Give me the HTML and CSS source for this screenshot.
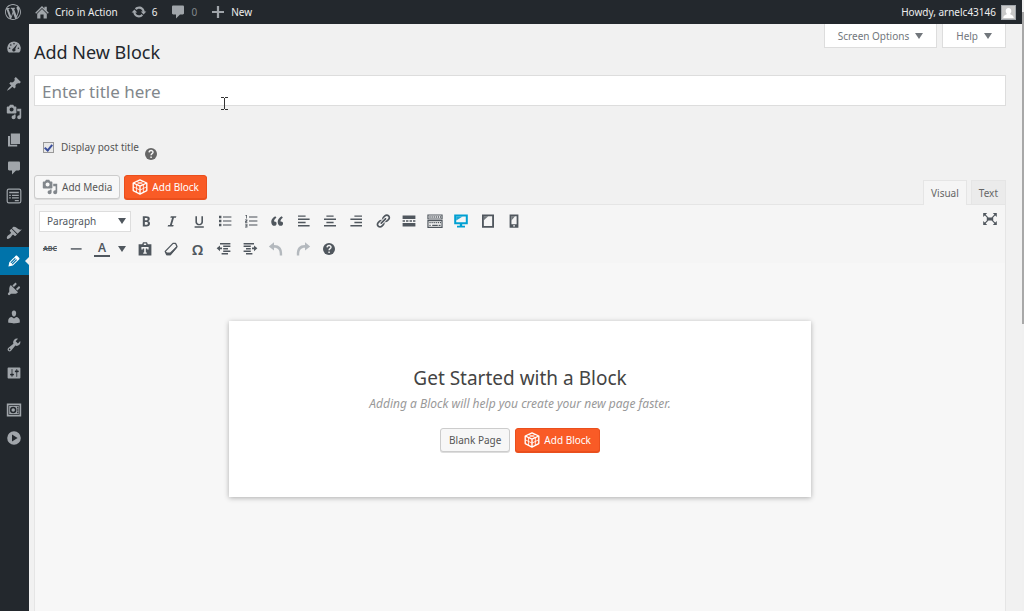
FILE: index.html
```html
<!DOCTYPE html>
<html lang="en">
<head>
  <meta charset="UTF-8">
  <meta name="viewport" content="width=device-width, initial-scale=1">
  <title>Add New Block</title>
  <link rel="stylesheet" href="styles.css">
</head>
<body>
  <svg class="sprite" aria-hidden="true">
    <symbol id="i-wp" viewBox="0 0 20 20"><path d="M20 10c0-5.51-4.49-10-10-10C4.48 0 0 4.49 0 10c0 5.52 4.48 10 10 10 5.51 0 10-4.48 10-10zM7.78 15.37L4.37 6.22c.55-.02 1.17-.08 1.17-.08.5-.06.44-1.13-.06-1.11 0 0-1.45.11-2.37.11-.18 0-.37 0-.58-.01C4.12 2.69 6.87 1.11 10 1.11c2.33 0 4.45.87 6.05 2.34-.68-.11-1.65.39-1.65 1.58 0 .74.45 1.36.9 2.1.35.61.55 1.36.55 2.46 0 1.49-1.4 5-1.4 5l-3.03-8.37c.54-.02.82-.17.82-.17.5-.05.44-1.25-.06-1.22 0 0-1.44.12-2.38.12-.87 0-2.33-.12-2.33-.12-.5-.03-.56 1.2-.06 1.22l.92.08 1.26 3.41zM17.41 10c.24-.64.74-1.87.43-4.25.7 1.29 1.05 2.71 1.05 4.25 0 3.29-1.73 6.24-4.4 7.78.97-2.59 1.94-5.2 2.92-7.78zM6.1 18.09C3.12 16.65 1.11 13.53 1.11 10c0-1.3.23-2.48.72-3.59C3.25 10.3 4.67 14.2 6.1 18.09zm4.03-6.63l2.58 6.98c-.86.29-1.76.45-2.71.45-.79 0-1.57-.11-2.29-.33.81-2.38 1.62-4.74 2.42-7.1z"/></symbol>
    <symbol id="i-home" viewBox="0 0 20 20"><path d="M16 8.500l2.500 2.500-1.200 1.200L10 4.900l-7.300 7.300L1.500 11 10 2.500l3 3v-2h3zM10 6.300l6 6V18h-4v-5H8v5H4v-5.700z"/></symbol>
    <symbol id="i-update" viewBox="0 0 20 20"><path d="M10.200 3.280c3.530 0 6.430 2.610 6.920 6h2.080l-3.500 4-3.500-4h2.320c-.45-1.970-2.210-3.450-4.320-3.450-1.450 0-2.730.71-3.540 1.780L4.950 5.660C6.230 4.200 8.110 3.280 10.200 3.280zm-.4 13.440c-3.520 0-6.430-2.610-6.920-6H.8l3.500-4 3.500 4H5.480c.45 1.970 2.210 3.450 4.320 3.450 1.450 0 2.730-.71 3.540-1.780l1.710 1.950c-1.280 1.460-3.150 2.380-5.250 2.380z"/></symbol>
    <symbol id="i-comment" viewBox="0 0 20 20"><path d="M4 2h12c.8 0 1.500.7 1.500 1.500v8c0 .8-.7 1.500-1.500 1.500h-3.500l-5 5v-5H4c-.8 0-1.500-.7-1.500-1.500v-8C2.500 2.700 3.200 2 4 2z"/></symbol>
    <symbol id="i-plus" viewBox="0 0 20 20"><path d="M17.500 8.600v2.800h-6.100v6.100H8.600v-6.100H2.500V8.600h6.100V2.500h2.800v6.100z"/></symbol>
    <symbol id="i-dash" viewBox="0 0 20 20"><path fill-rule="evenodd" d="M3.500 17h13A8.500 8.500 0 1 0 3.500 17zM10 5a1 1 0 1 1 0 2 1 1 0 0 1 0-2zM6 6.500a1 1 0 1 1 0 2 1 1 0 0 1 0-2zM14.500 6l-3 6.500a2 2 0 1 1-2.400-.7zM4.500 10.500a1 1 0 1 1 0 2 1 1 0 0 1 0-2zM15.500 10.500a1 1 0 1 1 0 2 1 1 0 0 1 0-2z"/></symbol>
    <symbol id="i-pin" viewBox="0 0 20 20"><path d="M10.440 3.020l1.820-1.820 6.360 6.350-1.830 1.820c-1.050-.68-2.480-.57-3.410.36l-.75.75c-.92.93-1.040 2.350-.35 3.410l-1.830 1.820-2.410-2.410-2.800 2.790c-.42.42-3.380 2.710-3.800 2.290s1.860-3.390 2.280-3.810l2.790-2.790L4.100 9.360l1.830-1.820c1.050.69 2.480.57 3.400-.36l.75-.75c.93-.92 1.050-2.350.36-3.410z"/></symbol>
    <symbol id="i-media" viewBox="0 0 20 20"><path d="M13 11V4c0-.55-.45-1-1-1h-1.670L9 1H5L3.670 3H2c-.55 0-1 .45-1 1v7c0 .55.45 1 1 1h10c.55 0 1-.45 1-1zM7 4.500c1.380 0 2.500 1.120 2.500 2.500S8.380 9.500 7 9.500 4.500 8.380 4.500 7 5.620 4.500 7 4.500zM14 6h5v10.500c0 1.380-1.120 2.500-2.500 2.500S14 17.880 14 16.500s1.120-2.500 2.500-2.500c.17 0 .34.020.5.050V9h-3V6zm-4 8.050V13h2v3.500c0 1.380-1.120 2.500-2.500 2.500S7 17.880 7 16.500 8.120 14 9.500 14c.17 0 .34.020.5.050z"/></symbol>
    <symbol id="i-page" viewBox="0 0 20 20"><path d="M6 15V2h11.500v13zM5 16h9v2H2.500V5H5z"/></symbol>
    <symbol id="i-form" viewBox="0 0 20 20"><rect x="1.500" y="1.500" width="17" height="17" rx="2" fill="none" stroke="currentColor" stroke-width="1.500"/><path d="M4 4.800h12v1.700H4zM4 8.500h2V10H4zM7.500 8.500H16V10H7.500zM4 11.500h2V13H4zM7.500 11.500H16V13H7.500zM11 15h5v1.500h-5z"/></symbol>
    <symbol id="i-brush" viewBox="0 0 20 20"><path d="M14.480 11.060L7.410 3.990l1.500-1.500c.5-.56 2.300-.47 3.510.32 1.210.8 1.430 1.280 2.910 2.100 1.180.64 2.450 1.260 4.450.85zm-.71.71L6.700 4.700 4.930 6.470c-.39.39-.39 1.020 0 1.410l1.060 1.060c.39.39.39 1.030 0 1.420-.6.6-1.430 1.110-2.210 1.690-.35.26-.7.53-1.010.84C1.430 14.230.4 16.080 1.400 17.070c.99 1 2.840-.03 4.180-1.360.31-.31.58-.66.85-1.020.57-.78 1.080-1.610 1.690-2.210.39-.39 1.020-.39 1.410 0l1.060 1.060c.39.39 1.020.39 1.410 0z"/></symbol>
    <symbol id="i-edit" viewBox="0 0 20 20"><path d="M13.890 3.390l2.710 2.720c.46.46.42 1.240.03 1.640l-8.010 8.020-5.560 1.160 1.160-5.580s7.600-7.630 7.990-8.030c.39-.39 1.220-.39 1.680.07zm-2.730 2.790l-5.590 5.610 1.110 1.110 5.540-5.650zm-2.970 8.230l5.580-5.600-1.070-1.080-5.590 5.600z"/></symbol>
    <symbol id="i-plug" viewBox="0 0 20 20"><path d="M13.110 4.360L9.870 7.600 8 5.730l3.240-3.240c.35-.34 1.050-.2 1.560.32.52.51.66 1.210.31 1.550zm-8 1.770l.91-1.120 9.010 9.010-1.190.84c-.71.71-2.630 1.160-3.820 1.160H6.140L4.900 17.260c-.59.59-1.540.59-2.120 0-.59-.58-.59-1.530 0-2.120l1.240-1.240v-3.880c0-1.130.4-3.190 1.090-3.890zm7.260 3.970l3.240-3.240c.34-.35 1.040-.21 1.550.31.52.51.66 1.210.31 1.550l-3.240 3.250z"/></symbol>
    <symbol id="i-user" viewBox="0 0 20 20"><path d="M10 9.250c-2.270 0-2.730-3.440-2.730-3.440C7 4.020 7.820 2 9.970 2c2.160 0 2.980 2.020 2.710 3.810 0 0-.41 3.440-2.680 3.440zm0 2.570L12.720 10c2.390 0 4.520 2.330 4.520 4.530v2.490s-3.650 1.130-7.240 1.130c-3.650 0-7.240-1.130-7.240-1.130v-2.490c0-2.250 1.940-4.480 4.470-4.480z"/></symbol>
    <symbol id="i-tool" viewBox="0 0 20 20"><path d="M16.680 9.770c-1.340 1.340-3.300 1.670-4.950.99l-5.410 6.520c-.99.99-2.590.99-3.580 0s-.99-2.590 0-3.570l6.520-5.420c-.68-1.650-.35-3.610.99-4.950 1.280-1.280 3.120-1.620 4.720-1.060l-2.890 2.890 2.820 2.820 2.860-2.870c.53 1.580.18 3.390-1.080 4.650zM3.810 16.210c.4.39 1.040.39 1.430 0 .4-.4.4-1.040 0-1.430-.39-.4-1.030-.4-1.430 0-.39.39-.39 1.030 0 1.430z"/></symbol>
    <symbol id="i-sliders" viewBox="0 0 20 20"><path d="M18 16V4c0-.55-.45-1-1-1H3c-.55 0-1 .45-1 1v12c0 .55.45 1 1 1h14c.55 0 1-.45 1-1zM8 11h1c.55 0 1 .45 1 1s-.45 1-1 1H8v1.500c0 .28-.22.5-.5.5s-.5-.22-.5-.5V13H6c-.55 0-1-.45-1-1s.45-1 1-1h1V5.500c0-.28.22-.5.5-.5s.5.22.5.5V11zm5-2h-1c-.55 0-1-.45-1-1s.45-1 1-1h1V5.500c0-.28.22-.5.5-.5s.5.22.5.5V7h1c.55 0 1 .45 1 1s-.45 1-1 1h-1v5.500c0 .28-.22.5-.5.5s-.5-.22-.5-.5V9z"/></symbol>
    <symbol id="i-vault" viewBox="0 0 20 20"><path fill-rule="evenodd" d="M1 2h18v16H1zM3 4v12h14V4z"/><path fill-rule="evenodd" d="M4 5h12v10H4zM9 6a4 4 0 1 0 0 8 4 4 0 0 0 0-8zM14 6v2h1.300V6zM14 9v2h1.300V9zM14 12v2h1.300v-2z"/><circle cx="9" cy="10" r="2.200"/></symbol>
    <symbol id="i-play" viewBox="0 0 20 20"><path fill-rule="evenodd" d="M10 1.500a8.500 8.500 0 1 1 0 17 8.500 8.500 0 0 1 0-17zM7.500 5.500v9l7-4.500z"/></symbol>
    <symbol id="i-help" viewBox="0 0 20 20"><circle cx="10" cy="10" r="7.500"/><path d="M7.600 8c.2-3.200 5-3 4.900-.2-.1 1.800-2.400 1.700-2.400 3.700M10.100 13v2" fill="none" stroke="#f5f5f5" stroke-width="1.800"/></symbol>
    <symbol id="i-cube" viewBox="0 0 20 20"><path fill="none" stroke="currentColor" stroke-width="1.700" stroke-linejoin="round" d="M10 1.200L18.500 5v9.500L10 18.800l-8.500-4.300V5zM1.500 5L10 9l8.500-4M10 9v9.800"/><path fill="none" stroke="currentColor" stroke-width="1" d="M5.700 3L14.200 7v9.500M14.200 3L5.700 7v9.500M1.500 9.700l8.500 4.200 8.500-4.200"/></symbol>
    <symbol id="i-bold" viewBox="0 0 20 20"><path d="M6 4v13h4.540c1.370 0 2.460-.33 3.260-1 .8-.66 1.200-1.580 1.200-2.770 0-.84-.17-1.510-.51-2.010s-.9-.85-1.670-1.030v-.09c.57-.1 1.020-.4 1.360-.9s.51-1.130.51-1.910c0-1.140-.39-1.980-1.170-2.500C12.750 4.260 11.500 4 9.780 4H6zm2.570 5.150V6.260h1.360c.73 0 1.270.11 1.610.32.34.22.51.58.51 1.070 0 .54-.16.92-.47 1.150s-.82.35-1.510.35h-1.500zm0 2.190h1.600c1.440 0 2.160.53 2.160 1.610 0 .6-.17 1.050-.51 1.340s-.86.43-1.570.43H8.570v-3.380z"/></symbol>
    <symbol id="i-italic" viewBox="0 0 20 20"><path d="M15.500 4h-7l-.6 2h2.200l-2.700 9H5.200l-.7 2h7l.6-2H9.800l2.700-9h2.300z"/></symbol>
    <symbol id="i-under" viewBox="0 0 20 20"><path d="M15 4h-2v6.700c0 2-1.100 3-2.700 3s-2.800-1-2.800-3V4h-2v6.900c0 1.900 1 4.500 4.700 4.500s4.800-2.600 4.800-4.500zM4.500 16.500h11.500v1.800H4.500z"/></symbol>
    <symbol id="i-ul" viewBox="0 0 20 20"><path d="M2.500 3.500h3v3h-3zM2.500 8.500h3v3h-3zM2.500 13.500h3v3h-3z"/><path opacity=".7" d="M7.500 4H18v1.800H7.500zM7.500 9H18v1.800H7.500zM7.500 14H18v1.800H7.500z"/></symbol>
    <symbol id="i-ol" viewBox="0 0 20 20"><path d="M3 2.500h2V7H4V3.500H3zM2.500 8.200h3v2l-1.500 1h1.500v1h-3v-1.500l1.800-1.500H2.500zM2.500 13.500h3V18h-3v-1h2v-.8H3v-1h1.500v-.7h-2z"/><path opacity=".7" d="M7.500 4H18v1.800H7.500zM7.500 9H18v1.800H7.500zM7.500 14H18v1.800H7.500z"/></symbol>
    <symbol id="i-quote" viewBox="0 0 20 20"><path d="M9.490 13.220c0-.74-.2-1.380-.61-1.900-.62-.78-1.830-.88-2.530-.72-.29-1.650 1.110-3.750 2.920-4.650L7.880 4c-2.730 1.300-5.420 4.280-4.960 8.050C3.210 14.430 4.590 16 6.540 16c.85 0 1.560-.25 2.120-.75s.83-1.180.83-2.030zm8.050 0c0-.74-.2-1.380-.61-1.900-.63-.78-1.830-.88-2.530-.72-.29-1.650 1.110-3.750 2.920-4.650L15.930 4c-2.730 1.300-5.410 4.280-4.950 8.050.29 2.380 1.660 3.950 3.610 3.950.85 0 1.560-.25 2.120-.75s.83-1.180.83-2.030z"/></symbol>
    <symbol id="i-left" viewBox="0 0 20 20"><path d="M2.500 3H12v1.800H2.500zM2.500 7H17v1.800H2.500zM2.500 11H12v1.800H2.500zM2.500 15H17v1.800H2.500z"/></symbol>
    <symbol id="i-center" viewBox="0 0 20 20"><path d="M5.500 3h9v1.800h-9zM2.500 7h15v1.800h-15zM5.500 11h9v1.800h-9zM2.500 15h15v1.800h-15z"/></symbol>
    <symbol id="i-right" viewBox="0 0 20 20"><path d="M8 3h9.500v1.800H8zM3 7h14.500v1.800H3zM8 11h9.500v1.800H8zM3 15h14.500v1.800H3z"/></symbol>
    <symbol id="i-link" viewBox="0 0 20 20"><path d="M17.740 2.760c1.680 1.690 1.680 4.410 0 6.100l-1.530 1.520c-1.120 1.120-2.700 1.470-4.140 1.090l2.620-2.610.76-.77.76-.76c.84-.84.84-2.200 0-3.040-.84-.85-2.200-.85-3.040 0l-.77.76-3.380 3.380c-.37-1.440-.02-3.020 1.100-4.140l1.520-1.530c1.690-1.680 4.420-1.680 6.100 0zM8.590 13.430l5.340-5.340c.42-.42.42-1.100 0-1.520-.44-.43-1.130-.39-1.530 0l-5.330 5.340c-.42.42-.42 1.100 0 1.520.44.43 1.130.39 1.520 0zm-.76 2.290l4.140-4.150c.38 1.440.03 3.020-1.090 4.140l-1.520 1.530c-1.690 1.680-4.410 1.680-6.100 0-1.680-1.680-1.680-4.420 0-6.100l1.530-1.520c1.120-1.120 2.700-1.470 4.140-1.100l-4.140 4.150c-.85.84-.85 2.200 0 3.050.84.84 2.200.84 3.040 0z"/></symbol>
    <symbol id="i-more" viewBox="0 0 20 20"><path d="M2 3h16v4.500H2zM2 9.200h3v1.600H2zM6.300 9.200h3v1.600h-3zM10.700 9.200h3v1.600h-3zM15 9.200h3v1.600h-3zM2 12.500h16V17H2z"/></symbol>
    <symbol id="i-keys" viewBox="0 0 20 20"><path fill="none" stroke="currentColor" stroke-width="1.500" d="M1.200 2.500h17.600v5H1.200zM1.200 9.500h17.600v8.500H1.200z"/><path fill="none" stroke="currentColor" stroke-width="1.800" stroke-dasharray="1.600 1" d="M3 5h14.500M3 12h14.500M3 15.500h2.500"/><path d="M6.500 14.700h7v1.600h-7zM14.500 14.700h2.500v1.600h-2.500z"/></symbol>
    <symbol id="i-desktop" viewBox="0 0 20 20"><path fill-rule="evenodd" d="M1.500 2h17v12h-7v2H15v2H5v-2h3.500v-2h-7zM4 4.300v7.400h12V4.300z"/><path d="M4 9.500V4.300h8z" opacity=".9"/></symbol>
    <symbol id="i-tablet" viewBox="0 0 20 20"><path fill-rule="evenodd" d="M2.500 2H17.500v16.500H2.500zM4.800 4.200v12h10.400v-12z"/><path d="M4.800 9V4h5.500z" opacity=".8"/></symbol>
    <symbol id="i-phone" viewBox="0 0 20 20"><path fill-rule="evenodd" d="M4.500 2h11v16.500h-11zM6.800 4.200v9.800h6.500V4.200zM9 15.300v1.700h2.200v-1.700z"/><path d="M6.800 9.500V4.200h4.500z" opacity=".8"/></symbol>
    <symbol id="i-hr" viewBox="0 0 20 20"><path d="M3.500 9h13.500v1.800H3.500z"/></symbol>
    <symbol id="i-paste" viewBox="0 0 20 20"><path fill-rule="evenodd" d="M2 4h4.500l1-2.500h5l1 2.500H18v14H2zM8.500 3v2h3V3zM5.500 7.500v3h1.700V9.300h1.800v5.200H7.800V16h4.400v-1.500H11V9.300h1.800v1.200h1.700v-3z"/></symbol>
    <symbol id="i-eraser" viewBox="0 0 20 20"><path fill="none" stroke="currentColor" stroke-width="1.600" stroke-linejoin="round" d="M12.500 3h3.300l1.700 4-8.500 10H4.500l-1.700-4z"/><path d="M2.800 12.500l2 2h4l8.500-8 .5 1.500L9.500 17.800h-5z"/></symbol>
    <symbol id="i-outdent" viewBox="0 0 20 20"><path d="M5 2.500h13v2H5zM9 5.600h9v2H9zM9 8.700h6v2H9zM9 11.800h9v2H9zM7 15h8v2H7zM.8 9.200L5 5.500v2.600h2.500v2.200H5v2.600z"/></symbol>
    <symbol id="i-indent" viewBox="0 0 20 20"><path d="M2 2.500h13v2H2zM2 5.600h9v2H2zM5 8.700h6v2H5zM2 11.800h9v2H2zM5 15h8v2H5zM19.200 9.200L15 5.500v2.600h-2.500v2.200H15v2.600z"/></symbol>
    <symbol id="i-undo" viewBox="0 0 20 20"><path d="M7.500 1.500L1 6.800l6.500 5V8.500c5 0 7.500 2.500 7.200 9.500h3c.6-9-3-13-10.200-13z"/></symbol>
    <symbol id="i-redo" viewBox="0 0 20 20"><path d="M12.500 1.500L19 6.800l-6.500 5V8.500c-5 0-7.500 2.500-7.200 9.500h-3c-.6-9 3-13 10.200-13z"/></symbol>
    <symbol id="i-full" viewBox="0 0 20 20"><path d="M1.500 2.500h5l-5 5zM18.500 2.500h-5l5 5zM1.500 17.500h5l-5-5zM18.500 17.500h-5l5-5zM6 8h8v4H6z"/><path fill="none" stroke="currentColor" stroke-width="1.500" d="M3 4l4.500 4.500M17 4l-4.500 4.500M3 16l4.500-4.500M17 16l-4.500-4.500"/></symbol>
    <symbol id="i-person" viewBox="0 0 20 20"><path d="M10 3c3 0 4.500 2.200 4.300 5-.2 2-1 3.200-1.800 4 .2 2 5.500 1.500 5.500 6.500H2c0-5 5.300-4.500 5.500-6.500-.8-.8-1.600-2-1.800-4C5.500 5.200 7 3 10 3z"/></symbol>
  </svg>

  <header class="adminbar">
    <a href="#" class="bar-logo" aria-label="About WordPress"><svg><use href="#i-wp"/></svg></a>
    <a href="#"><svg><use href="#i-home"/></svg>Crio in Action</a>
    <a href="#"><svg><use href="#i-update"/></svg>6</a>
    <a href="#"><svg><use href="#i-comment"/></svg><span class="zero">0</span></a>
    <a href="#"><svg><use href="#i-plus"/></svg>New</a>
    <a href="#" class="bar-account">Howdy, arnelc43146 <svg class="avatar"><use href="#i-person"/></svg></a>
  </header>

  <div class="wrap">
    <nav class="menu" aria-label="Main menu">
      <a href="#" aria-label="Dashboard"><svg><use href="#i-dash"/></svg></a>
      <a href="#" class="group" aria-label="Posts"><svg><use href="#i-pin"/></svg></a>
      <a href="#" aria-label="Media"><svg><use href="#i-media"/></svg></a>
      <a href="#" aria-label="Pages"><svg><use href="#i-page"/></svg></a>
      <a href="#" aria-label="Comments"><svg><use href="#i-comment"/></svg></a>
      <a href="#" aria-label="Forms"><svg><use href="#i-form"/></svg></a>
      <a href="#" class="group" aria-label="Appearance"><svg><use href="#i-brush"/></svg></a>
      <a href="#" class="current" aria-label="Blocks"><svg><use href="#i-edit"/></svg></a>
      <a href="#" aria-label="Plugins"><svg><use href="#i-plug"/></svg></a>
      <a href="#" aria-label="Users"><svg><use href="#i-user"/></svg></a>
      <a href="#" aria-label="Tools"><svg><use href="#i-tool"/></svg></a>
      <a href="#" aria-label="Settings"><svg><use href="#i-sliders"/></svg></a>
      <a href="#" class="group" aria-label="Backup"><svg><use href="#i-vault"/></svg></a>
      <a href="#" aria-label="Collapse menu"><svg><use href="#i-play"/></svg></a>
    </nav>

    <main class="content">
      <div class="top">
        <h1>Add New Block</h1>
        <div class="screen-meta">
          <button type="button">Screen Options <span class="caret"></span></button>
          <button type="button">Help <span class="caret"></span></button>
        </div>
      </div>

      <input class="title" type="text" placeholder="Enter title here" aria-label="Title">

      <div class="display-title">
        <input type="checkbox" id="displayTitle" checked>
        <label for="displayTitle">Display post title</label>
        <svg><use href="#i-help"/></svg>
      </div>

      <div class="editor-tools">
        <button type="button" class="btn"><svg><use href="#i-media"/></svg>Add Media</button>
        <button type="button" class="btn primary"><svg><use href="#i-cube"/></svg>Add Block</button>
        <div class="tabs">
          <button type="button" class="active">Visual</button>
          <button type="button">Text</button>
        </div>
      </div>

      <section class="editor">
        <div class="toolbar">
          <div class="row">
            <div class="format-select">
              <select aria-label="Format"><option>Paragraph</option></select>
              <span class="caret"></span>
            </div>
            <div class="tools first">
              <button type="button" aria-label="Bold"><svg><use href="#i-bold"/></svg></button>
              <button type="button" aria-label="Italic"><svg><use href="#i-italic"/></svg></button>
              <button type="button" aria-label="Underline"><svg><use href="#i-under"/></svg></button>
              <button type="button" aria-label="Bulleted list"><svg><use href="#i-ul"/></svg></button>
              <button type="button" aria-label="Numbered list"><svg><use href="#i-ol"/></svg></button>
              <button type="button" aria-label="Blockquote"><svg><use href="#i-quote"/></svg></button>
              <button type="button" aria-label="Align left"><svg><use href="#i-left"/></svg></button>
              <button type="button" aria-label="Align center"><svg><use href="#i-center"/></svg></button>
              <button type="button" aria-label="Align right"><svg><use href="#i-right"/></svg></button>
              <button type="button" aria-label="Insert link"><svg><use href="#i-link"/></svg></button>
              <button type="button" aria-label="Read more"><svg><use href="#i-more"/></svg></button>
              <button type="button" aria-label="Toolbar toggle"><svg><use href="#i-keys"/></svg></button>
              <button type="button" class="on" aria-label="Desktop"><svg><use href="#i-desktop"/></svg></button>
              <button type="button" aria-label="Tablet"><svg><use href="#i-tablet"/></svg></button>
              <button type="button" aria-label="Phone"><svg><use href="#i-phone"/></svg></button>
            </div>
            <button type="button" class="fullscreen" aria-label="Fullscreen"><svg><use href="#i-full"/></svg></button>
          </div>
          <div class="row">
            <div class="tools format">
              <button type="button" class="strike" aria-label="Strikethrough">ABC</button>
              <button type="button" aria-label="Horizontal line"><svg><use href="#i-hr"/></svg></button>
              <button type="button" aria-label="Text color"><span class="color">A</span></button>
              <button type="button" aria-label="Pick color"><span class="caret"></span></button>
            </div>
            <div class="tools second">
              <button type="button" aria-label="Paste as text"><svg><use href="#i-paste"/></svg></button>
              <button type="button" aria-label="Clear formatting"><svg><use href="#i-eraser"/></svg></button>
              <button type="button" class="omega" aria-label="Special character">Ω</button>
              <button type="button" aria-label="Decrease indent"><svg><use href="#i-outdent"/></svg></button>
              <button type="button" aria-label="Increase indent"><svg><use href="#i-indent"/></svg></button>
              <button type="button" class="off" aria-label="Undo"><svg><use href="#i-undo"/></svg></button>
              <button type="button" class="off" aria-label="Redo"><svg><use href="#i-redo"/></svg></button>
              <button type="button" aria-label="Help"><svg><use href="#i-help"/></svg></button>
            </div>
          </div>
        </div>

        <div class="canvas">
          <div class="start">
            <h2>Get Started with a Block</h2>
            <p>Adding a Block will help you create your new page faster.</p>
            <div class="actions">
              <button type="button" class="btn">Blank Page</button>
              <button type="button" class="btn primary"><svg><use href="#i-cube"/></svg>Add Block</button>
            </div>
          </div>
        </div>
      </section>
    </main>
  </div>

  <svg class="cursor" viewBox="0 0 7 13" aria-hidden="true"><path d="M0 .5h3M4 .5h3M3.500 1v11M0 12.500h3M4 12.500h3"/></svg>
  <div class="scrollbar"></div>
</body>
</html>
```

FILE: styles.css
```css
* {
  box-sizing: border-box;
}
body {
  margin: 0;
  min-height: 100vh;
  display: flex;
  flex-direction: column;
  background: #f1f1f1;
  color: #555;
  font-family: "Noto Sans", "Open Sans", sans-serif;
  font-size: 10px;
  line-height: 16px;
}
svg {
  width: 16px;
  height: 16px;
  flex: none;
  fill: currentColor;
}
a {
  color: inherit;
  text-decoration: none;
}
button, input, select {
  font: inherit;
  color: inherit;
  margin: 0;
}
button {
  padding: 0;
  border: none;
  background: none;
  white-space: nowrap;
}
.sprite {
  position: absolute;
  width: 0;
  height: 0;
}
.caret {
  border: 4px solid transparent;
  border-top: 6px solid currentColor;
  border-bottom: none;
}

/* admin bar */
.adminbar {
  display: flex;
  gap: 13px;
  height: 24px;
  padding: 0 8px 0 5px;
  background: #23282d;
  color: #eee;
}
.adminbar a {
  display: flex;
  align-items: center;
  gap: 5px;
}
.adminbar svg {
  color: #a0a5aa;
}
.zero {
  color: #82878c;
}
.adminbar .bar-account {
  margin-left: auto;
}
.adminbar .avatar {
  width: 15px;
  height: 15px;
  background: #c8c8c8;
  border: 1px solid #a0a5aa;
  color: #fff;
}

/* side menu */
.wrap {
  display: flex;
  flex: 1;
}
.menu {
  width: 29px;
  padding-top: 9px;
  background: #23282d;
  color: #a0a5aa;
}
.menu a {
  display: flex;
  align-items: center;
  height: 28px;
  padding-left: 6px;
}
.menu .group {
  margin-top: 9px;
}
.menu .current {
  position: relative;
  background: #0073aa;
  color: #fff;
}
.menu .current::after {
  content: "";
  position: absolute;
  right: 0;
  border: 4px solid transparent;
  border-left: none;
  border-right-color: #f1f1f1;
}

/* page */
.content {
  flex: 1;
  display: flex;
  flex-direction: column;
  padding: 0 18px 0 5px;
}
.top {
  display: flex;
  justify-content: space-between;
  align-items: flex-start;
}
h1 {
  margin: 16px 0 11px;
  color: #23282d;
  font-size: 18px;
  font-weight: 400;
  line-height: 24px;
}
.screen-meta {
  display: flex;
  gap: 5px;
  color: #72777c;
}
.screen-meta button {
  display: flex;
  align-items: center;
  gap: 6px;
  height: 24px;
  padding: 0 13px;
  background: #fff;
  border: 1px solid #ddd;
  border-top: none;
}
.title {
  width: 100%;
  height: 31px;
  padding: 2px 7px 0;
  border: 1px solid #ddd;
  background: #fff;
  font-size: 17px;
}
.title::placeholder {
  color: #82878c;
}
.display-title {
  display: flex;
  align-items: center;
  margin-top: 26px;
  padding-left: 9px;
}
.display-title input {
  appearance: none;
  display: grid;
  place-items: center;
  width: 11px;
  height: 11px;
  margin-right: 7px;
  border: 1px solid #999;
  background: #e8e8e8;
}
.display-title input:checked::before {
  content: "";
  width: 3px;
  height: 6px;
  margin-bottom: 2px;
  border: solid #3b4f9c;
  border-width: 0 2px 2px 0;
  transform: rotate(40deg);
}
.display-title svg {
  margin: 14px 0 0 4px;
  color: #666;
}
.editor-tools {
  display: flex;
  align-items: flex-start;
  gap: 4px;
  margin-top: 13px;
}
.btn {
  display: flex;
  align-items: center;
  gap: 4px;
  height: 24px;
  padding: 0 7px;
  border: 1px solid #ccc;
  border-radius: 3px;
  background: #f7f7f7;
  box-shadow: 0 1px 0 #ddd;
}
.btn svg {
  color: #82878c;
}
.primary {
  border-color: #ea4f1d;
  background: #f95b26;
  box-shadow: 0 1px 0 #ea4f1d;
  color: #fff;
}
.primary svg {
  color: #fff;
}
.tabs {
  display: flex;
  gap: 4px;
  margin: 5px 0 0 auto;
}
.tabs button {
  height: 24px;
  padding: 0 7px;
  border: 1px solid #e5e5e5;
  border-bottom: none;
  background: #ebebeb;
  color: #666;
}
.tabs .active {
  height: 25px;
  margin-bottom: -1px;
  background: #f5f5f5;
  z-index: 1;
}

/* editor */
.editor {
  flex: 1;
  display: flex;
  flex-direction: column;
  border: 1px solid #e5e5e5;
  border-bottom: none;
  background: #f7f7f7;
}
.toolbar {
  padding: 2px 4px 0;
  background: #f5f5f5;
  color: #50575e;
}
.row {
  display: flex;
  align-items: center;
  height: 28px;
}
.format-select {
  display: grid;
  align-items: center;
  width: 92px;
}
.format-select > * {
  grid-area: 1 / 1;
}
.format-select select {
  appearance: none;
  height: 21px;
  padding: 0 7px;
  border: 1px solid #ddd;
  border-radius: 0;
  background: #fff;
}
.format-select .caret {
  justify-self: end;
  margin-right: 5px;
  pointer-events: none;
}
.tools {
  display: grid;
  grid-auto-flow: column;
  grid-auto-columns: 1fr;
}
.tools button, .fullscreen {
  display: flex;
  align-items: center;
  justify-content: center;
  height: 26px;
}
.first {
  width: 394px;
  margin-left: 2px;
}
.tools .on {
  color: #00a0d2;
}
.tools .off {
  color: #b4b9be;
}
.fullscreen {
  margin: 0 3px 4px auto;
}
.format {
  grid-template-columns: 26px 26px 26px 13px;
  margin: 0 4px 0 -2px;
}
.second {
  width: 210px;
}
.tools .strike {
  font-size: 7px;
  font-weight: 700;
  text-decoration: line-through;
}
.color {
  width: 16px;
  border-bottom: 2px solid currentColor;
  font-size: 12px;
  font-weight: 600;
  line-height: 14px;
}
.tools .omega {
  font-size: 15px;
  font-weight: 600;
}
.canvas {
  flex: 1;
  padding-top: 58px;
}
.start {
  width: 60%;
  margin: 0 auto;
  padding: 41px 20px 45px;
  background: #fff;
  box-shadow: 0 1px 5px rgba(0, 0, 0, 0.3);
  text-align: center;
}
.start h2 {
  margin: 0;
  color: #444;
  font-size: 19px;
  font-weight: 400;
  line-height: 32px;
}
.start p {
  margin: 2px 0 16px;
  color: #999;
  font-size: 12px;
  font-style: italic;
}
.actions {
  display: flex;
  justify-content: center;
  gap: 5px;
}
.actions .btn {
  padding: 0 8px;
}

/* things over the page */
.cursor {
  position: absolute;
  left: 221px;
  top: 97px;
  width: 7px;
  height: 13px;
  fill: none;
  stroke: #333;
}
.scrollbar {
  position: fixed;
  top: 0;
  right: 0;
  width: 2px;
  height: 100vh;
  background: linear-gradient(#f0f0f0 2%, #a8a8a8 2%, #a8a8a8 53%, #f0f0f0 53%);
}
```
